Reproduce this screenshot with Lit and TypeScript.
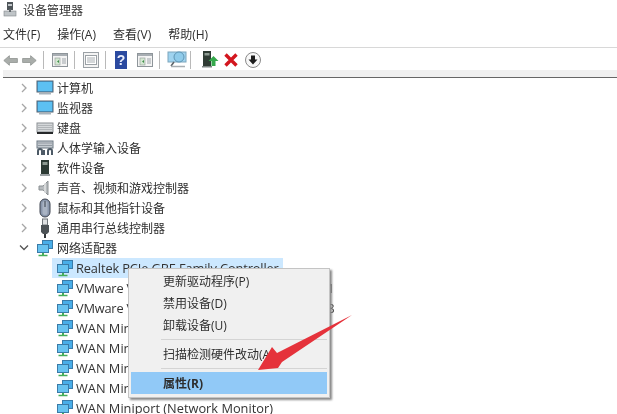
import { LitElement, html, css, svg } from "lit";
import { customElement } from "lit/decorators.js";

const monitor = svg`<svg width="18" height="16" viewBox="0 0 18 16"><rect x="1" y="1" width="16" height="11" fill="#3fa9ea" stroke="#55626e"/><rect x="2" y="2" width="14" height="9" fill="#5cc0f2"/><rect x="3" y="13" width="12" height="1.5" fill="#a9b3bb"/></svg>`;
const keyboard = svg`<svg width="18" height="16" viewBox="0 0 18 16"><rect x="1" y="3" width="16" height="9" fill="#d5d8da" stroke="#8b9094"/><path d="M2.5 5.5h13M2.5 7.5h13M2.5 9.5h13" stroke="#8d9296" stroke-dasharray="1 1"/><rect x="1" y="12" width="16" height="2" fill="#26282a"/></svg>`;
const hid = svg`<svg width="18" height="18" viewBox="0 0 18 18"><rect x="1" y="2" width="16" height="7" fill="#c4cad0" stroke="#6c7883"/><path d="M2.5 4h13M2.5 6.5h13" stroke="#606a74" stroke-dasharray="1 1"/><path d="M2 16v-4q0-2 2-2t2 2v4M8 16v-5M12 16v-4q0-2 2-2t2 2v4" fill="none" stroke="#4d5a66" stroke-width="2"/></svg>`;
const software = svg`<svg width="18" height="18" viewBox="0 0 18 18"><rect x="5" y="1" width="8" height="14" fill="#2c3a34"/><rect x="6.5" y="3" width="5" height="3" fill="#8d9a92"/><rect x="4" y="15" width="10" height="2" fill="#9aa0a3"/></svg>`;
const sound = svg`<svg width="18" height="18" viewBox="0 0 18 18"><path d="M3 7h4l5-5v14l-5-5H3z" fill="#b7bbbe" stroke="#8b9093"/><path d="M9 4v10" stroke="#e3e4e5" stroke-width="1.5"/></svg>`;
const mouse = svg`<svg width="18" height="20" viewBox="0 0 18 20"><rect x="4" y="1" width="10" height="18" rx="5" fill="#8a97ad" stroke="#3e4450"/><rect x="6.5" y="3" width="5" height="14" rx="2.5" fill="#aab4c4"/><path d="M9 3v6" stroke="#39404c"/></svg>`;
const usb = svg`<svg width="18" height="20" viewBox="0 0 18 20"><rect x="6.5" y="1" width="5" height="6" fill="#dfe1e3" stroke="#70767b"/><path d="M5 7h8v7l-2 2H7l-2-2z" fill="#4c5256"/><rect x="8" y="16" width="2" height="4" fill="#34383b"/></svg>`;
const net = svg`<svg width="18" height="18" viewBox="0 0 18 18"><rect x="6.500" y="1.500" width="10" height="8" fill="#49aee9" stroke="#3a7ba8"/><rect x="1.500" y="5.500" width="11" height="8" fill="#68c3f0" stroke="#3a7ba8"/><path d="M7 14v2" stroke="#45ad58" stroke-width="2"/><path d="M2.500 16.500h9" stroke="#45ad58" stroke-width="1.500"/></svg>`;

const top = [
  ["计算机", monitor], ["监视器", monitor], ["键盘", keyboard], ["人体学输入设备", hid],
  ["软件设备", software], ["声音、视频和游戏控制器", sound], ["鼠标和其他指针设备", mouse], ["通用串行总线控制器", usb],
] as const;

const adapters = [
  "Realtek PCIe GBE Family Controller",
  "VMware Virtual Ethernet Adapter for VMnet1",
  "VMware Virtual Ethernet Adapter for VMnet8",
  "WAN Miniport (IKEv2)", "WAN Miniport (IP)", "WAN Miniport (IPv6)", "WAN Miniport (L2TP)",
  "WAN Miniport (Network Monitor)",
];

@customElement("app-root")
export class AppRoot extends LitElement {
  static styles = css`
    :host { display: block; width: 617px; height: 414px; overflow: hidden; position: relative; background: #fff;
      font-family: "Open Sans", "Noto Sans CJK SC", sans-serif; font-size: 12px; color: #2e2e2e; filter: blur(0.3px); }
    .title { height: 20px; display: flex; align-items: center; gap: 6px; padding-left: 3px; color: #333; }
    .title svg { display: block; }
    .menubar { height: 28px; display: flex; align-items: center; padding: 2px 0 0 3px; gap: 17px; border-bottom: 1px solid #d8d8d8; box-sizing: border-box; }
    .menubar span { line-height: 16px; }
    .toolbar { height: 22px; box-sizing: border-box; padding: 2px 0 0 3px; display: flex; align-items: center; }
    .toolbar svg { display: block; flex: none; }
    .sep { width: 1px; height: 18px; background: #b9b9b9; flex: none; }
    .m2 { margin-left: 2px; }
    .s1 { margin: 0 6px; }
    .s2 { margin: 0 6px 0 4px; }
    .s3 { margin: 0 7px 0 4px; }
    .s4 { margin: 0 6px 0 0; }
    .s5 { margin: 0 7px 0 4px; }
    .s6 { margin: 0 9px 0 3px; }
    .x { margin: 0 5px 0 3px; }
    .band { height: 8px; background: #f0f0f0; border-bottom: 1px solid #666; margin-left: 3px; box-sizing: border-box; }
    .tree { display: flex; flex-direction: column; }
    .row { height: 20px; display: flex; align-items: center; white-space: nowrap; padding-left: 19px; }
    .row .chev { width: 10px; flex: none; display: flex; justify-content: center; margin-right: 6px; }
    .row .ico { width: 19px; flex: none; display: flex; justify-content: center; margin-right: 3px; }
    .child { padding-left: 55px; }
    .child .ico { margin-right: 2px; }
    .child span.t { font-size: 12.8px; color: #333; }
    .child.vm span.t { letter-spacing: -0.2px; }
    .sel { background: #cce8ff; width: 231px; margin-left: 52px; padding-left: 3px; overflow: hidden; box-sizing: border-box; }
    .sel span.t { letter-spacing: -0.12px; }
    .menu { position: absolute; left: 128px; top: 268px; width: 202px; height: 130px; box-sizing: border-box;
      background: #f0f0f0; border: 1px solid #c4c4c4; box-shadow: 2px 2px 2px #8a8a8a; padding: 1px 2px 2px 2px;
      display: flex; flex-direction: column; color: #2e2e2e; }
    .mi { height: 22px; display: flex; align-items: center; padding-left: 32px; flex: none; white-space: nowrap; }
    .msep { height: 1px; background: #d4d4d4; margin: 3px 0 3px 30px; flex: none; }
    .mi.on { background: #91c9f7; font-weight: 700; }
    .arrow { position: absolute; left: 250px; top: 312px; pointer-events: none; }
  `;

  chev(open = false) {
    return open
      ? html`<svg width="10" height="8" viewBox="0 0 10 8"><path d="M1 1.5l4 4 4-4" fill="none" stroke="#555" stroke-width="1.3"/></svg>`
      : html`<svg width="8" height="10" viewBox="0 0 8 10"><path d="M2 1l4 4-4 4" fill="none" stroke="#a6a6a6" stroke-width="1.3"/></svg>`;
  }

  toolbar() {
    const win = () => html`<svg width="20" height="18" viewBox="0 0 20 18"><rect x="2.5" y="2.5" width="15" height="13" fill="#f4f4f4" stroke="#8e959a"/><rect x="3" y="3" width="14" height="2" fill="#a8aeb3"/><rect x="5" y="7" width="5" height="7" fill="#d4e8d2" stroke="#9aa3a0" stroke-width=".7"/><path d="M12 8h4M12 10h4M12 12h4" stroke="#9ea5aa"/><path d="M9 9v3l-2-1.500z" fill="#3f8f4a"/></svg>`;
    return html`<div class="toolbar">
      <svg width="16" height="15" viewBox="0 0 20 18"><path d="M1 9l7-6v3.500h10v5H8V15z" fill="#a9adaa" stroke="#8f9391"/></svg>
      <svg class="m2" width="16" height="15" viewBox="0 0 20 18"><path d="M19 9l-7-6v3.500H2v5h10V15z" fill="#a9adaa" stroke="#8f9391"/></svg>
      <div class="sep s1"></div>
      ${win()}
      <div class="sep s2"></div>
      <svg width="20" height="18" viewBox="0 0 20 18"><rect x="2.500" y="1.500" width="15" height="15" fill="#f4f4f4" stroke="#9ba1a6"/><rect x="4.500" y="4.500" width="11" height="9" fill="#fff" stroke="#9ba1a6"/><path d="M6 7h8M6 9h8M6 11h8" stroke="#a8aeb2"/></svg>
      <div class="sep s3"></div>
      <svg class="s4" width="16" height="20" viewBox="0 0 16 20"><rect x="2" y="1" width="12" height="18" fill="#2b4aa0"/><text x="8" y="15" font-size="14" font-weight="700" fill="#eaeefc" text-anchor="middle" font-family="Liberation Sans">?</text></svg>
      ${win()}
      <div class="sep s5"></div>
      <svg width="20" height="20" viewBox="0 0 20 20"><rect x="1" y="2" width="18" height="10" fill="#9fd3ef" stroke="#7da6bd"/><circle cx="12" cy="7" r="5" fill="#8fcbea" stroke="#5f96b5"/><path d="M7 12l-3 4" stroke="#5c6368" stroke-width="1.500"/><path d="M4 16.500h14" stroke="#a8aeb2" stroke-width="1.500"/></svg>
      <div class="sep s6"></div>
      <svg width="20" height="20" viewBox="0 0 20 20"><rect x="3" y="1" width="8" height="15" fill="#2f3b34"/><rect x="4.500" y="3" width="5" height="2.500" fill="#8d9a92"/><rect x="2" y="16" width="10" height="1.500" fill="#7d8583"/><path d="M13.500 6l5 5h-3v5h-4v-5h-3z" fill="#35a84c"/></svg>
      <svg class="x" width="16" height="16" viewBox="0 0 16 16"><path d="M2.500 2.500L13.500 13.500M13.500 2.500L2.500 13.500" stroke="#d3161f" stroke-width="3.400"/></svg>
      <svg width="18" height="18" viewBox="0 0 18 18"><circle cx="9" cy="9" r="7.500" fill="#f7f7f7" stroke="#8a8a8a"/><path d="M7 4.500h4v4h2.500L9 13.500 4.500 8.500H7z" fill="#1c1c1c"/></svg>
    </div>`;
  }

  render() {
    return html`
      <div class="title">
        <svg width="14" height="16" viewBox="0 0 14 16"><rect x="4" y="0" width="6" height="8" fill="#4e5559"/><rect x="5" y="2" width="4" height="2" fill="#c2c7ca"/><rect x="1" y="9" width="12" height="5" fill="#bfc4c7" stroke="#80868a" stroke-width=".6"/><rect x="6" y="7" width="2" height="3" fill="#5f666a"/></svg>
        <span>设备管理器</span>
      </div>
      <div class="menubar"><span>文件(F)</span><span>操作(A)</span><span>查看(V)</span><span>帮助(H)</span></div>
      ${this.toolbar()}
      <div class="band"></div>
      <div class="tree">
        ${top.map(([t, i]) => html`<div class="row"><span class="chev">${this.chev()}</span><span class="ico">${i}</span><span>${t}</span></div>`)}
        <div class="row"><span class="chev">${this.chev(true)}</span><span class="ico">${net}</span><span>网络适配器</span></div>
        ${adapters.map((a, n) => html`<div class="row child ${n === 0 ? "sel" : ""} ${a.startsWith("VMware") ? "vm" : ""}"><span class="ico">${net}</span><span class="t">${a}</span></div>`)}
      </div>
      <div class="menu">
        <div class="mi">更新驱动程序(P)</div>
        <div class="mi">禁用设备(D)</div>
        <div class="mi">卸载设备(U)</div>
        <div class="msep"></div>
        <div class="mi">扫描检测硬件改动(A)</div>
        <div class="msep"></div>
        <div class="mi on">属性(R)</div>
      </div>
      <svg class="arrow" width="105" height="62" viewBox="0 0 105 62"><path d="M8 58L22 35l5 6L102 3 32 50l-4 6z" fill="#e5323b"/></svg>
    `;
  }
}
